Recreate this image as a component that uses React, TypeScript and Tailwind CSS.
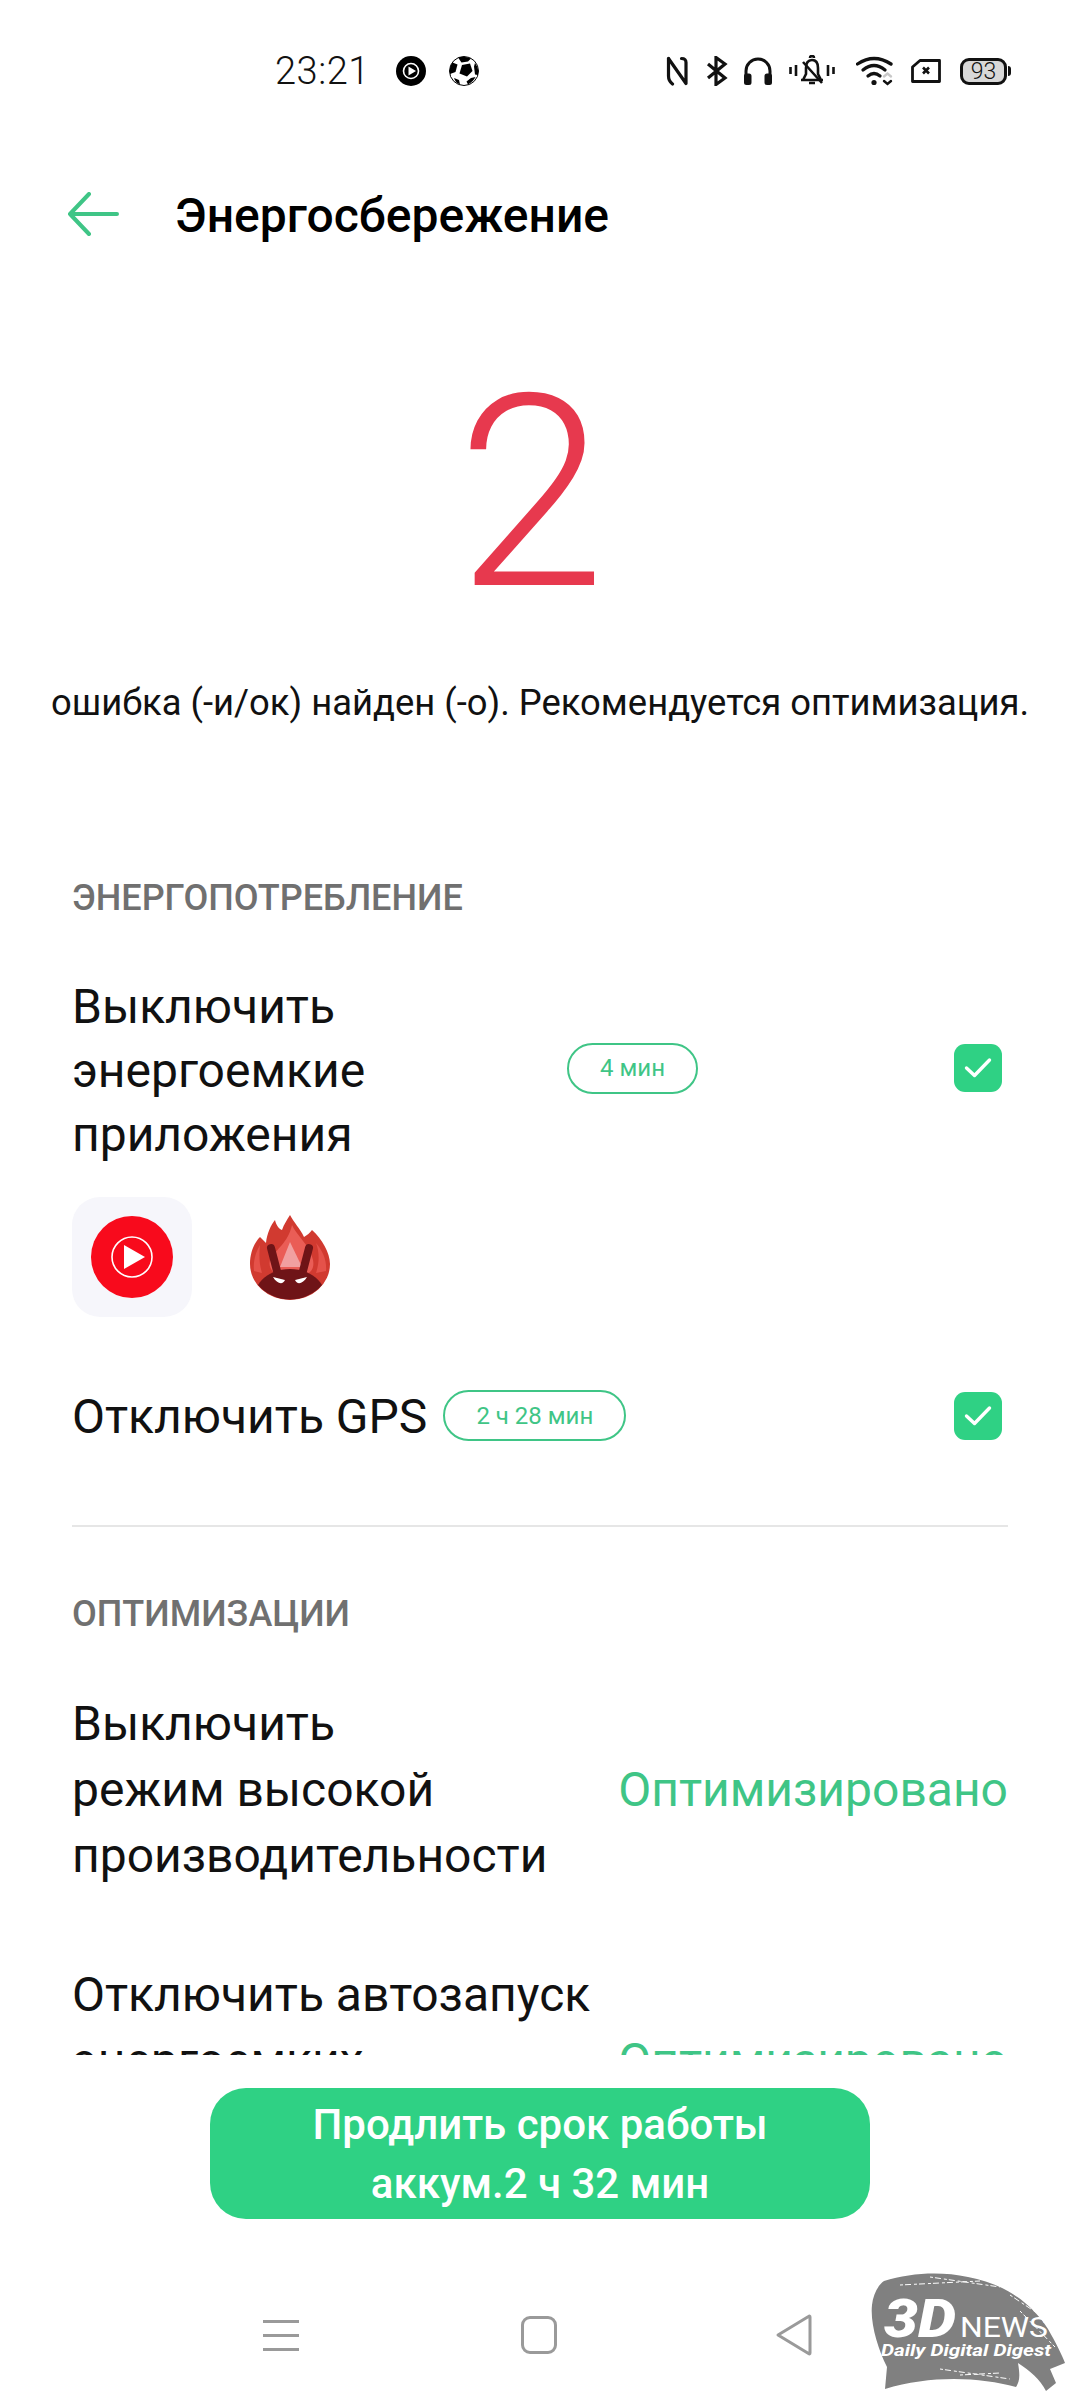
const font = "font-['Roboto',sans-serif]";

const StatusIcons = () => (
  <div className="ml-auto flex items-center pr-[73px]">
    <svg width="22" height="30" viewBox="0 0 22 30" fill="none" stroke="#111" strokeWidth="3.2" strokeLinejoin="round" strokeLinecap="round" className="mr-[18px]">
      <path d="M2.5 2.5 V20 Q2.5 25 6.5 28" />
      <path d="M2.5 2.5 L20 27.5 V6.5 Q20 2.5 15.5 2.5" />
    </svg>
    <svg width="22" height="30" viewBox="0 0 22 30" fill="none" stroke="#111" strokeWidth="3.2" className="mr-[16px]">
      <path d="M2 8 L19 22 L10 28.5 V1.5 L19 8 L2 22" />
    </svg>
    <svg width="28" height="28" viewBox="0 0 28 28" fill="none" stroke="#111" strokeWidth="3" className="mr-[17px]">
      <path d="M2 24 V14 a12 12 0 0 1 24 0 V24" />
      <rect x="1.5" y="18" width="4.5" height="8.5" rx="1" fill="#111" />
      <rect x="22" y="18" width="4.5" height="8.5" rx="1" fill="#111" />
    </svg>
    <svg width="46" height="32" viewBox="0 0 46 32" fill="none" stroke="#111" strokeWidth="2.6" className="mr-[21px]">
      <path d="M1.5 12 V19 M7 10 V21 M39 10 V21 M44.5 12 V19" />
      <path d="M12 25 H34 M14 25 L17 19 V13 Q17 5 23 5 Q29 5 29 13 V19 L32 25" />
      <path d="M21 3 a2 2 0 0 1 4 0 M20 28 H26 M14 7 L33 28" />
    </svg>
    <svg width="38" height="30" viewBox="0 0 38 30" fill="none" stroke="#111" strokeWidth="3.3" strokeLinecap="round" className="mr-[17px]">
      <path d="M1.5 8 Q18 -3 35 8" />
      <path d="M7 14 Q18 5 29 14" />
      <path d="M12 20 Q18 15 24 20" />
      <circle cx="18" cy="26.5" r="2.6" fill="#111" stroke="none" />
      <path d="M28 20.5 L31.5 17.5 L35 20.5" stroke="#c8c8c8" strokeWidth="2.4" />
      <path d="M28 25 L31.5 28 L35 25" strokeWidth="2.4" />
    </svg>
    <svg width="30" height="24" viewBox="0 0 30 24" fill="none" stroke="#111" strokeWidth="2.8" className="mr-[19px]">
      <path d="M9 1.5 H28.5 V22.5 H1.5 V8 Z" strokeLinejoin="round" />
      <path d="M12 8.5 L18 14.5 M18 8.5 L12 14.5" strokeWidth="2.6" />
    </svg>
    <div className="relative flex h-[27px] w-[47px] items-center justify-center rounded-[9px] border-[3px] border-[#111] bg-[#d8d8d8] text-[23px] leading-none font-light text-[#111]">
      93
      <span className="absolute right-[-7px] h-[10px] w-[3px] rounded-r-sm bg-[#111]" />
    </div>
  </div>
);

const Pill = ({ children, className }: { children: string; className: string }) => (
  <span className={`flex h-[51px] shrink-0 items-center justify-center rounded-full border-2 border-[#3fc586] text-[24px] text-[#3fc586] ${className}`}>
    {children}
  </span>
);

const Check = () => (
  <span className="flex h-[48px] w-[48px] shrink-0 items-center justify-center rounded-[11px] bg-[#2fd184]">
    <svg width="28" height="22" viewBox="0 0 28 22" fill="none" stroke="#fff" strokeWidth="3.4" strokeLinecap="round" strokeLinejoin="round">
      <path d="M2.5 11 L10.5 18.5 L25.5 3" />
    </svg>
  </span>
);

const AntIcon = () => (
  <svg width="80" height="85" viewBox="0 0 80 85">
    <path d="M40 0 C44 8 50 13 54 22 C57 20 60 18 62 15 C72 24 80 38 80 49 A40 36 0 0 1 0 49 C0 38 4 28 10 22 C12 24 14 26 16 28 C17 18 21 10 25 5 C26 10 29 14 32 15 C34 9 37 5 40 0 Z" fill="#d13a30" />
    <path d="M42 10 C46 20 60 30 63 45 C65 55 60 62 40 62 C22 62 18 52 20 45 C26 34 38 28 42 10 Z" fill="#ea5d56" />
    <path d="M66 28 C73 36 77 46 76 56 L66 58 C70 46 69 36 66 28 Z" fill="#e5524a" />
    <path d="M10 30 C5 38 3 48 4 56 L12 58 C9 48 9 40 10 30 Z" fill="#e5524a" />
    <path d="M40 27 L52 52 H30 Z" fill="#f1a0a0" />
    <path d="M21 33 L27 56 M59 33 L53 56" stroke="#6f1417" strokeWidth="8" strokeLinecap="round" fill="none" />
    <path d="M8 70 C14 60 26 54 40 54 C54 54 66 60 72 70 A40 36 0 0 1 8 70 Z" fill="#6f1417" />
    <path d="M23 62 L35 65 C33 70 27 69 23 62 Z M57 62 L45 65 C47 70 53 69 57 62 Z" fill="#fff" />
  </svg>
);

const Watermark = () => (
  <svg width="196" height="126" viewBox="0 0 196 126" className="absolute right-[14px] bottom-[3px]">
    <path d="M14 10 C40 2 70 0 98 6 C132 12 160 30 178 58 C186 72 192 84 195 92 L180 98 L186 112 L176 120 C170 108 160 100 148 92 C150 104 150 110 146 116 C110 106 60 104 15 118 L17 96 C8 78 0 52 2 34 C3 24 8 14 14 10 Z" fill="#808080" />
    <path d="M30 14 L110 10 M60 6 L130 16 M140 24 L170 44 M150 40 L185 76 M70 98 L140 108 M90 104 L130 102" stroke="#fff" strokeWidth="1" strokeDasharray="3 2 6 3" fill="none" />
    <text x="14" y="66" textLength="72" lengthAdjust="spacingAndGlyphs" fontFamily="Roboto" fontWeight="900" fontStyle="italic" fontSize="54" fill="#fff">3D</text>
    <text x="90" y="66" textLength="88" lengthAdjust="spacingAndGlyphs" fontFamily="Roboto" fontWeight="400" fontSize="27" fill="#fff">NEWS</text>
    <text x="11" y="85" textLength="170" lengthAdjust="spacingAndGlyphs" fontFamily="Roboto" fontWeight="700" fontStyle="italic" fontSize="17" fill="#fff">Daily Digital Digest</text>
  </svg>
);

export default function App() {
  return (
    <div className={`relative flex h-[2400px] w-[1080px] flex-col overflow-hidden bg-white ${font}`}>
      <div className="flex h-[142px] shrink-0 items-center">
        <div className="flex items-center pl-[275px]">
          <span className="text-[38px] leading-none font-light tracking-[0.5px] text-[#111]">23:21</span>
          <svg width="30" height="30" viewBox="0 0 30 30" className="ml-[26px]">
            <circle cx="15" cy="15" r="15" fill="#000" />
            <circle cx="15" cy="15" r="7.5" fill="none" stroke="#fff" strokeWidth="1.6" />
            <path d="M12.5 10.5 L20 15 L12.5 19.5 Z" fill="#fff" />
          </svg>
          <svg width="30" height="30" viewBox="0 0 30 30" className="ml-[23px]">
            <circle cx="15" cy="15" r="14.5" fill="#fff" stroke="#000" strokeWidth="1" />
            <path d="M13 9 L21 7.5 L23.5 15 L18 20.5 L10.5 17.5 Z" fill="#000" />
            <path d="M9 1.5 Q15 -0.5 22 2.5 L19 5.5 L12.5 6.5 Z" fill="#000" />
            <path d="M3.5 6.5 L8.5 8.5 L6.5 16 L1 18 Q0 11 3.5 6.5 Z" fill="#000" />
            <path d="M26 7 Q30 12 29 19 L26 18.5 L25 10.5 Z" fill="#000" />
            <path d="M22 22 L26.5 21 Q24 26 19 28.5 L17.5 25.5 Z" fill="#000" />
            <path d="M5 22 L10 24 L11 28.5 Q6.5 27 5 22 Z" fill="#000" />
          </svg>
        </div>
        <StatusIcons />
      </div>

      <div className="flex h-[146px] shrink-0 items-center">
        <svg width="52" height="44" viewBox="0 0 52 44" fill="none" stroke="#3fc586" strokeWidth="4" strokeLinecap="round" strokeLinejoin="round" className="mt-[-2px] ml-[67px]">
          <path d="M50 22 H3 M22 2 L3 22 L22 42" />
        </svg>
        <h1 className="mt-[2px] ml-[56px] text-[48px] leading-none font-medium text-black">Энергосбережение</h1>
      </div>

      <div className="min-h-0 flex-1 overflow-hidden">
        <div className="flex h-[393px] items-center justify-center pt-[16px] pr-[18px]">
          <span className="text-[268px] leading-none font-light text-[#e7394e]">2</span>
        </div>
        <p className="text-center text-[36.4px] leading-[44px] text-[#111]">ошибка (-и/ок) найден (-о). Рекомендуется оптимизация.</p>

        <div className="mt-[153px] px-[72px]">
          <h2 className="text-[36px] leading-[40px] font-medium text-[#707070]">ЭНЕРГОПОТРЕБЛЕНИЕ</h2>

          <div className="mt-[57px] flex items-center">
            <div className="w-[495px] text-[48px] leading-[64px] text-[#111]">
              Выключить
              <br />
              энергоемкие
              <br />
              приложения
            </div>
            <Pill className="mb-[6px] w-[131px]">4 мин</Pill>
            <span className="mr-[6px] mb-[6px] ml-auto">
              <Check />
            </span>
          </div>

          <div className="mt-[30px] flex items-center gap-[58px]">
            <div className="flex h-[120px] w-[120px] items-center justify-center rounded-[28px] bg-[#f6f6fb]">
              <svg width="82" height="82" viewBox="0 0 82 82">
                <circle cx="41" cy="41" r="41" fill="#f80a1c" />
                <circle cx="41" cy="41" r="20" fill="none" stroke="#fff" strokeWidth="1.6" />
                <path d="M33 29 L54 41 L33 53 Z" fill="#fff" />
              </svg>
            </div>
            <AntIcon />
          </div>

          <div className="mt-[72px] flex items-center">
            <span className="text-[48px] leading-[56px] text-[#111]">Отключить GPS</span>
            <Pill className="mb-[3px] ml-[16px] w-[183px]">2 ч 28 мин</Pill>
            <span className="mr-[6px] mb-[3px] ml-auto">
              <Check />
            </span>
          </div>

          <div className="mt-[80px] h-[2px] bg-[#e6e6e6]" />

          <h2 className="mt-[67px] text-[36px] leading-[40px] font-medium text-[#707070]">ОПТИМИЗАЦИИ</h2>

          <div className="mt-[57px] flex items-center justify-between">
            <div className="text-[48px] leading-[66px] text-[#111]">
              Выключить
              <br />
              режим высокой
              <br />
              производительности
            </div>
            <span className="text-[48px] text-[#3fc586]">Оптимизировано</span>
          </div>

          {/* third line of this row sits below the fold */}
          <div className="mt-[73px] flex h-[198px] items-center justify-between">
            <div className="h-full text-[48px] leading-[66px] text-[#111]">
              Отключить автозапуск
              <br />
              энергоемких
            </div>
            <span className="text-[48px] text-[#3fc586]">Оптимизировано</span>
          </div>
        </div>
      </div>

      <div className="flex h-[345px] shrink-0 flex-col items-center pt-[33px]">
        <button type="button" className="flex h-[131px] w-[660px] items-center justify-center rounded-[36px] bg-[#2fd184] text-center text-[42px] leading-[59px] font-medium text-white">
          Продлить срок работы
          <br />
          аккум.2 ч 32 мин
        </button>
        <div className="mt-[95px] flex items-center">
          <div className="ml-[-4px] flex w-[36px] flex-col gap-[11px]">
            <span className="h-[3px] bg-[#9a9a9a]" />
            <span className="h-[3px] bg-[#9a9a9a]" />
            <span className="h-[3px] bg-[#9a9a9a]" />
          </div>
          <div className="ml-[222px] h-[38px] w-[36px] rounded-[9px] border-[3px] border-[#9a9a9a]" />
          <svg width="38" height="42" viewBox="0 0 38 42" fill="none" stroke="#9a9a9a" strokeWidth="3" strokeLinejoin="round" className="ml-[218px]">
            <path d="M35 3 Q35 1.5 33.5 2.5 L3 21 L33.5 39.5 Q35 40.5 35 39 Z" />
          </svg>
        </div>
      </div>

      <Watermark />
    </div>
  );
}
